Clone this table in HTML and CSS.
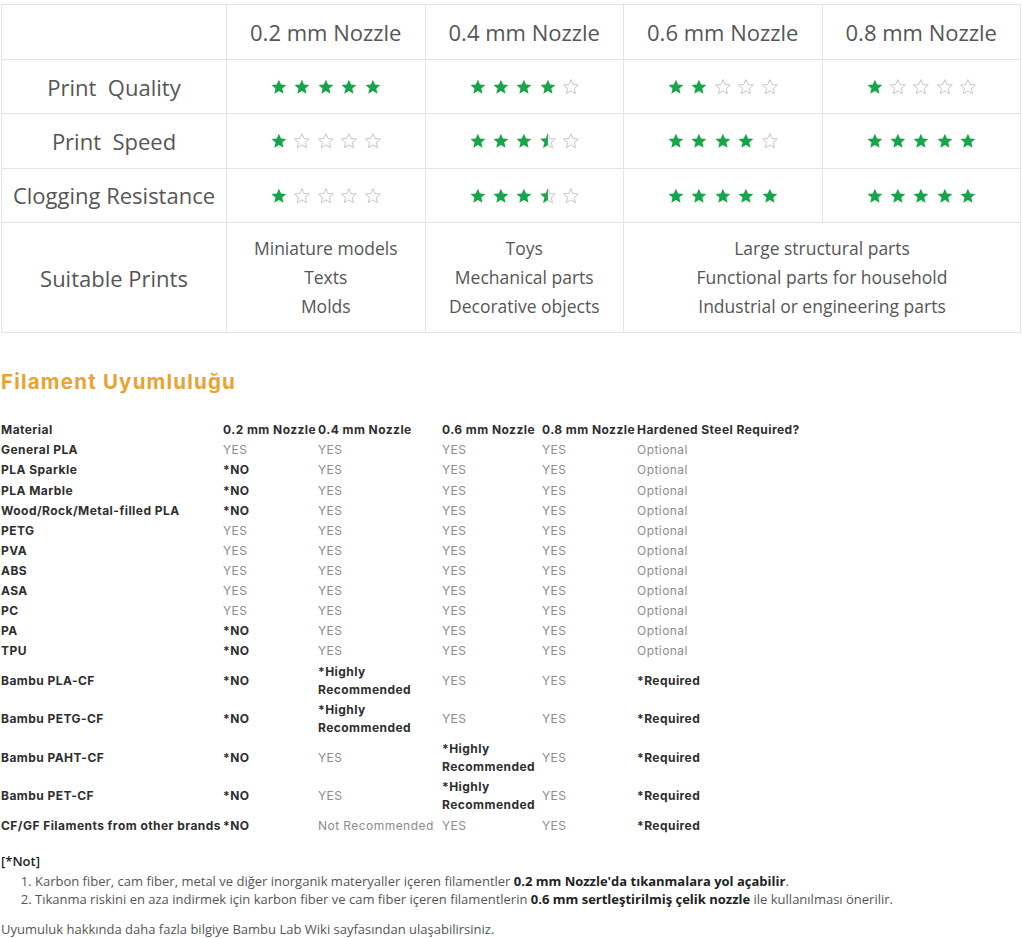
FILE: index.html
```html
<!DOCTYPE html>
<html lang="tr">
<head>
<meta charset="utf-8">
<title>Nozzle karşılaştırma</title>
<link rel="stylesheet" href="styles.css">
</head>
<body>
<svg class="defs" width="0" height="0" aria-hidden="true">
  <defs>
    <path id="sp" d="M12 2.2l2.85 6.6 7.15.62-5.42 4.72 1.62 7.02L12 17.45l-6.2 3.71 1.62-7.02L2 9.42l7.15-.62z"/>
    <clipPath id="lh"><rect x="0" y="0" width="12" height="24"/></clipPath>
  </defs>
</svg>

<main class="page">
<table class="cmp">
  <colgroup><col class="c-label"><col class="c-n"><col class="c-n"><col class="c-n"><col class="c-n"></colgroup>
  <tr class="r-head">
    <th></th><th>0.2 mm Nozzle</th><th>0.4 mm Nozzle</th><th>0.6 mm Nozzle</th><th>0.8 mm Nozzle</th>
  </tr>
  <tr class="r-star">
    <th>Print&nbsp; Quality</th>
    <td><div class="stars"><svg class="st on" viewBox="0 0 24 24"><use href="#sp"/></svg><svg class="st on" viewBox="0 0 24 24"><use href="#sp"/></svg><svg class="st on" viewBox="0 0 24 24"><use href="#sp"/></svg><svg class="st on" viewBox="0 0 24 24"><use href="#sp"/></svg><svg class="st on" viewBox="0 0 24 24"><use href="#sp"/></svg></div></td>
    <td><div class="stars"><svg class="st on" viewBox="0 0 24 24"><use href="#sp"/></svg><svg class="st on" viewBox="0 0 24 24"><use href="#sp"/></svg><svg class="st on" viewBox="0 0 24 24"><use href="#sp"/></svg><svg class="st on" viewBox="0 0 24 24"><use href="#sp"/></svg><svg class="st off" viewBox="0 0 24 24"><use href="#sp"/></svg></div></td>
    <td><div class="stars"><svg class="st on" viewBox="0 0 24 24"><use href="#sp"/></svg><svg class="st on" viewBox="0 0 24 24"><use href="#sp"/></svg><svg class="st off" viewBox="0 0 24 24"><use href="#sp"/></svg><svg class="st off" viewBox="0 0 24 24"><use href="#sp"/></svg><svg class="st off" viewBox="0 0 24 24"><use href="#sp"/></svg></div></td>
    <td><div class="stars"><svg class="st on" viewBox="0 0 24 24"><use href="#sp"/></svg><svg class="st off" viewBox="0 0 24 24"><use href="#sp"/></svg><svg class="st off" viewBox="0 0 24 24"><use href="#sp"/></svg><svg class="st off" viewBox="0 0 24 24"><use href="#sp"/></svg><svg class="st off" viewBox="0 0 24 24"><use href="#sp"/></svg></div></td>
  </tr>
  <tr class="r-star">
    <th>Print&nbsp; Speed</th>
    <td><div class="stars"><svg class="st on" viewBox="0 0 24 24"><use href="#sp"/></svg><svg class="st off" viewBox="0 0 24 24"><use href="#sp"/></svg><svg class="st off" viewBox="0 0 24 24"><use href="#sp"/></svg><svg class="st off" viewBox="0 0 24 24"><use href="#sp"/></svg><svg class="st off" viewBox="0 0 24 24"><use href="#sp"/></svg></div></td>
    <td><div class="stars"><svg class="st on" viewBox="0 0 24 24"><use href="#sp"/></svg><svg class="st on" viewBox="0 0 24 24"><use href="#sp"/></svg><svg class="st on" viewBox="0 0 24 24"><use href="#sp"/></svg><svg class="st half" viewBox="0 0 24 24"><use class="o" href="#sp"/><use class="f" href="#sp" clip-path="url(#lh)"/></svg><svg class="st off" viewBox="0 0 24 24"><use href="#sp"/></svg></div></td>
    <td><div class="stars"><svg class="st on" viewBox="0 0 24 24"><use href="#sp"/></svg><svg class="st on" viewBox="0 0 24 24"><use href="#sp"/></svg><svg class="st on" viewBox="0 0 24 24"><use href="#sp"/></svg><svg class="st on" viewBox="0 0 24 24"><use href="#sp"/></svg><svg class="st off" viewBox="0 0 24 24"><use href="#sp"/></svg></div></td>
    <td><div class="stars"><svg class="st on" viewBox="0 0 24 24"><use href="#sp"/></svg><svg class="st on" viewBox="0 0 24 24"><use href="#sp"/></svg><svg class="st on" viewBox="0 0 24 24"><use href="#sp"/></svg><svg class="st on" viewBox="0 0 24 24"><use href="#sp"/></svg><svg class="st on" viewBox="0 0 24 24"><use href="#sp"/></svg></div></td>
  </tr>
  <tr class="r-star">
    <th>Clogging Resistance</th>
    <td><div class="stars"><svg class="st on" viewBox="0 0 24 24"><use href="#sp"/></svg><svg class="st off" viewBox="0 0 24 24"><use href="#sp"/></svg><svg class="st off" viewBox="0 0 24 24"><use href="#sp"/></svg><svg class="st off" viewBox="0 0 24 24"><use href="#sp"/></svg><svg class="st off" viewBox="0 0 24 24"><use href="#sp"/></svg></div></td>
    <td><div class="stars"><svg class="st on" viewBox="0 0 24 24"><use href="#sp"/></svg><svg class="st on" viewBox="0 0 24 24"><use href="#sp"/></svg><svg class="st on" viewBox="0 0 24 24"><use href="#sp"/></svg><svg class="st half" viewBox="0 0 24 24"><use class="o" href="#sp"/><use class="f" href="#sp" clip-path="url(#lh)"/></svg><svg class="st off" viewBox="0 0 24 24"><use href="#sp"/></svg></div></td>
    <td><div class="stars"><svg class="st on" viewBox="0 0 24 24"><use href="#sp"/></svg><svg class="st on" viewBox="0 0 24 24"><use href="#sp"/></svg><svg class="st on" viewBox="0 0 24 24"><use href="#sp"/></svg><svg class="st on" viewBox="0 0 24 24"><use href="#sp"/></svg><svg class="st on" viewBox="0 0 24 24"><use href="#sp"/></svg></div></td>
    <td><div class="stars"><svg class="st on" viewBox="0 0 24 24"><use href="#sp"/></svg><svg class="st on" viewBox="0 0 24 24"><use href="#sp"/></svg><svg class="st on" viewBox="0 0 24 24"><use href="#sp"/></svg><svg class="st on" viewBox="0 0 24 24"><use href="#sp"/></svg><svg class="st on" viewBox="0 0 24 24"><use href="#sp"/></svg></div></td>
  </tr>
  <tr class="r-suit">
    <th>Suitable Prints</th>
    <td class="list">Miniature models<br>Texts<br>Molds</td>
    <td class="list">Toys<br>Mechanical parts<br>Decorative objects</td>
    <td class="list" colspan="2">Large structural parts<br>Functional parts for household<br>Industrial or engineering parts</td>
  </tr>
</table>

<h2 class="title">Filament Uyumluluğu</h2>

<table class="fil">
  <colgroup><col class="f1"><col class="f2"><col class="f3"><col class="f4"><col class="f5"><col class="f6"></colgroup>
  <tr><th>Material</th><th>0.2 mm Nozzle</th><th>0.4 mm Nozzle</th><th>0.6 mm Nozzle</th><th>0.8 mm Nozzle</th><th>Hardened Steel Required?</th></tr>
  <tr><th>General PLA</th><td>YES</td><td>YES</td><td>YES</td><td>YES</td><td>Optional</td></tr>
  <tr><th>PLA Sparkle</th><td class="b">*NO</td><td>YES</td><td>YES</td><td>YES</td><td>Optional</td></tr>
  <tr><th>PLA Marble</th><td class="b">*NO</td><td>YES</td><td>YES</td><td>YES</td><td>Optional</td></tr>
  <tr><th>Wood/Rock/Metal-filled PLA</th><td class="b">*NO</td><td>YES</td><td>YES</td><td>YES</td><td>Optional</td></tr>
  <tr><th>PETG</th><td>YES</td><td>YES</td><td>YES</td><td>YES</td><td>Optional</td></tr>
  <tr><th>PVA</th><td>YES</td><td>YES</td><td>YES</td><td>YES</td><td>Optional</td></tr>
  <tr><th>ABS</th><td>YES</td><td>YES</td><td>YES</td><td>YES</td><td>Optional</td></tr>
  <tr><th>ASA</th><td>YES</td><td>YES</td><td>YES</td><td>YES</td><td>Optional</td></tr>
  <tr><th>PC</th><td>YES</td><td>YES</td><td>YES</td><td>YES</td><td>Optional</td></tr>
  <tr><th>PA</th><td class="b">*NO</td><td>YES</td><td>YES</td><td>YES</td><td>Optional</td></tr>
  <tr><th>TPU</th><td class="b">*NO</td><td>YES</td><td>YES</td><td>YES</td><td>Optional</td></tr>
  <tr class="dbl"><th>Bambu PLA-CF</th><td class="b">*NO</td><td class="b">*Highly<br>Recommended</td><td>YES</td><td>YES</td><td class="b">*Required</td></tr>
  <tr class="dbl"><th>Bambu PETG-CF</th><td class="b">*NO</td><td class="b">*Highly<br>Recommended</td><td>YES</td><td>YES</td><td class="b">*Required</td></tr>
  <tr class="dbl"><th>Bambu PAHT-CF</th><td class="b">*NO</td><td>YES</td><td class="b">*Highly<br>Recommended</td><td>YES</td><td class="b">*Required</td></tr>
  <tr class="dbl"><th>Bambu PET-CF</th><td class="b">*NO</td><td>YES</td><td class="b">*Highly<br>Recommended</td><td>YES</td><td class="b">*Required</td></tr>
  <tr><th>CF/GF Filaments from other brands</th><td class="b">*NO</td><td>Not Recommended</td><td>YES</td><td>YES</td><td class="b">*Required</td></tr>
</table>

<section class="notes">
  <p class="note-h">[*Not]</p>
  <ol class="note-list">
    <li>Karbon fiber, cam fiber, metal ve diğer inorganik materyaller içeren filamentler <strong>0.2 mm Nozzle'da tıkanmalara yol açabilir</strong>.</li>
    <li>Tıkanma riskini en aza indirmek için karbon fiber ve cam fiber içeren filamentlerin <strong>0.6 mm sertleştirilmiş çelik nozzle</strong> ile kullanılması önerilir.</li>
  </ol>
  <p class="more">Uyumuluk hakkında daha fazla bilgiye Bambu Lab Wiki sayfasından ulaşabilirsiniz.</p>
</section>
</main>
</body>
</html>
```

FILE: styles.css
```css
html, body {
  margin: 0;
  padding: 0;
  background: #ffffff;
}

.defs {
  display: block;
  width: 0;
  height: 0;
  overflow: hidden;
}

.page {
  padding: 4px 0 0 1px;
}

/* ---------- comparison table ---------- */
.cmp {
  border-collapse: collapse;
  table-layout: fixed;
  width: 1019px;
  font-family: "Open Sans", "Noto Sans", sans-serif;
  color: #565656;
}

.cmp .c-label { width: 225px; }
.cmp .c-n { width: 198.5px; }

.cmp th,
.cmp td {
  border: 1px solid #e4e4e4;
  text-align: center;
  vertical-align: middle;
  padding: 0;
  font-weight: 400;
}

.cmp th {
  font-size: 22px;
}

.r-head { height: 55px; }
.r-star { height: 54.4px; }
.r-suit { height: 110px; }

.cmp .list {
  font-size: 17.5px;
  line-height: 29px;
}

.stars {
  display: flex;
  justify-content: center;
  align-items: center;
  gap: 5.6px;
}

.st {
  width: 17.8px;
  height: 17.8px;
  display: block;
}

.st.on { fill: #16a54b; }

.st.off {
  fill: none;
  stroke: #c4c4c4;
  stroke-width: 1.3;
  stroke-linejoin: round;
}

.st.half .o {
  fill: none;
  stroke: #c4c4c4;
  stroke-width: 1.3;
  stroke-linejoin: round;
}

.st.half .f { fill: #16a54b; }

/* ---------- filament table ---------- */
.title {
  margin: 37px 0 0 0;
  font-family: Inter, "Noto Sans", sans-serif;
  font-weight: 700;
  font-size: 20.5px;
  line-height: 24px;
  color: #e8a332;
  letter-spacing: 1.2px;
}

.fil {
  margin-top: 26px;
  border-collapse: collapse;
  table-layout: fixed;
  width: 820px;
  font-family: Inter, "Noto Sans", sans-serif;
  font-size: 12px;
  letter-spacing: 0.45px;
  line-height: 18px;
  color: #8c8c8c;
}

.fil .f1 { width: 222px; }
.fil .f2 { width: 95px; }
.fil .f3 { width: 124px; }
.fil .f4 { width: 100px; }
.fil .f5 { width: 95px; }
.fil .f6 { width: 184px; }

.fil th,
.fil td {
  padding: 1.05px 0;
  text-align: left;
  vertical-align: middle;
  white-space: nowrap;
}

.fil .dbl th,
.fil .dbl td {
  padding: 1.3px 0;
}

.fil th {
  font-weight: 700;
  color: #2e2e2e;
}

.fil td.b {
  font-weight: 700;
  color: #2e2e2e;
}

/* ---------- notes ---------- */
.notes {
  margin-top: 16px;
  font-family: "Open Sans", "Noto Sans", sans-serif;
  font-size: 13px;
  line-height: 18px;
  color: #555555;
}

.note-h {
  margin: 0;
  color: #222222;
  font-weight: 600;
}

.note-list {
  margin: 2px 0 0 0;
  padding-left: 34px;
}

.note-list strong {
  color: #222222;
  font-weight: 700;
}

.more {
  margin: 12px 0 0 0;
}
```
